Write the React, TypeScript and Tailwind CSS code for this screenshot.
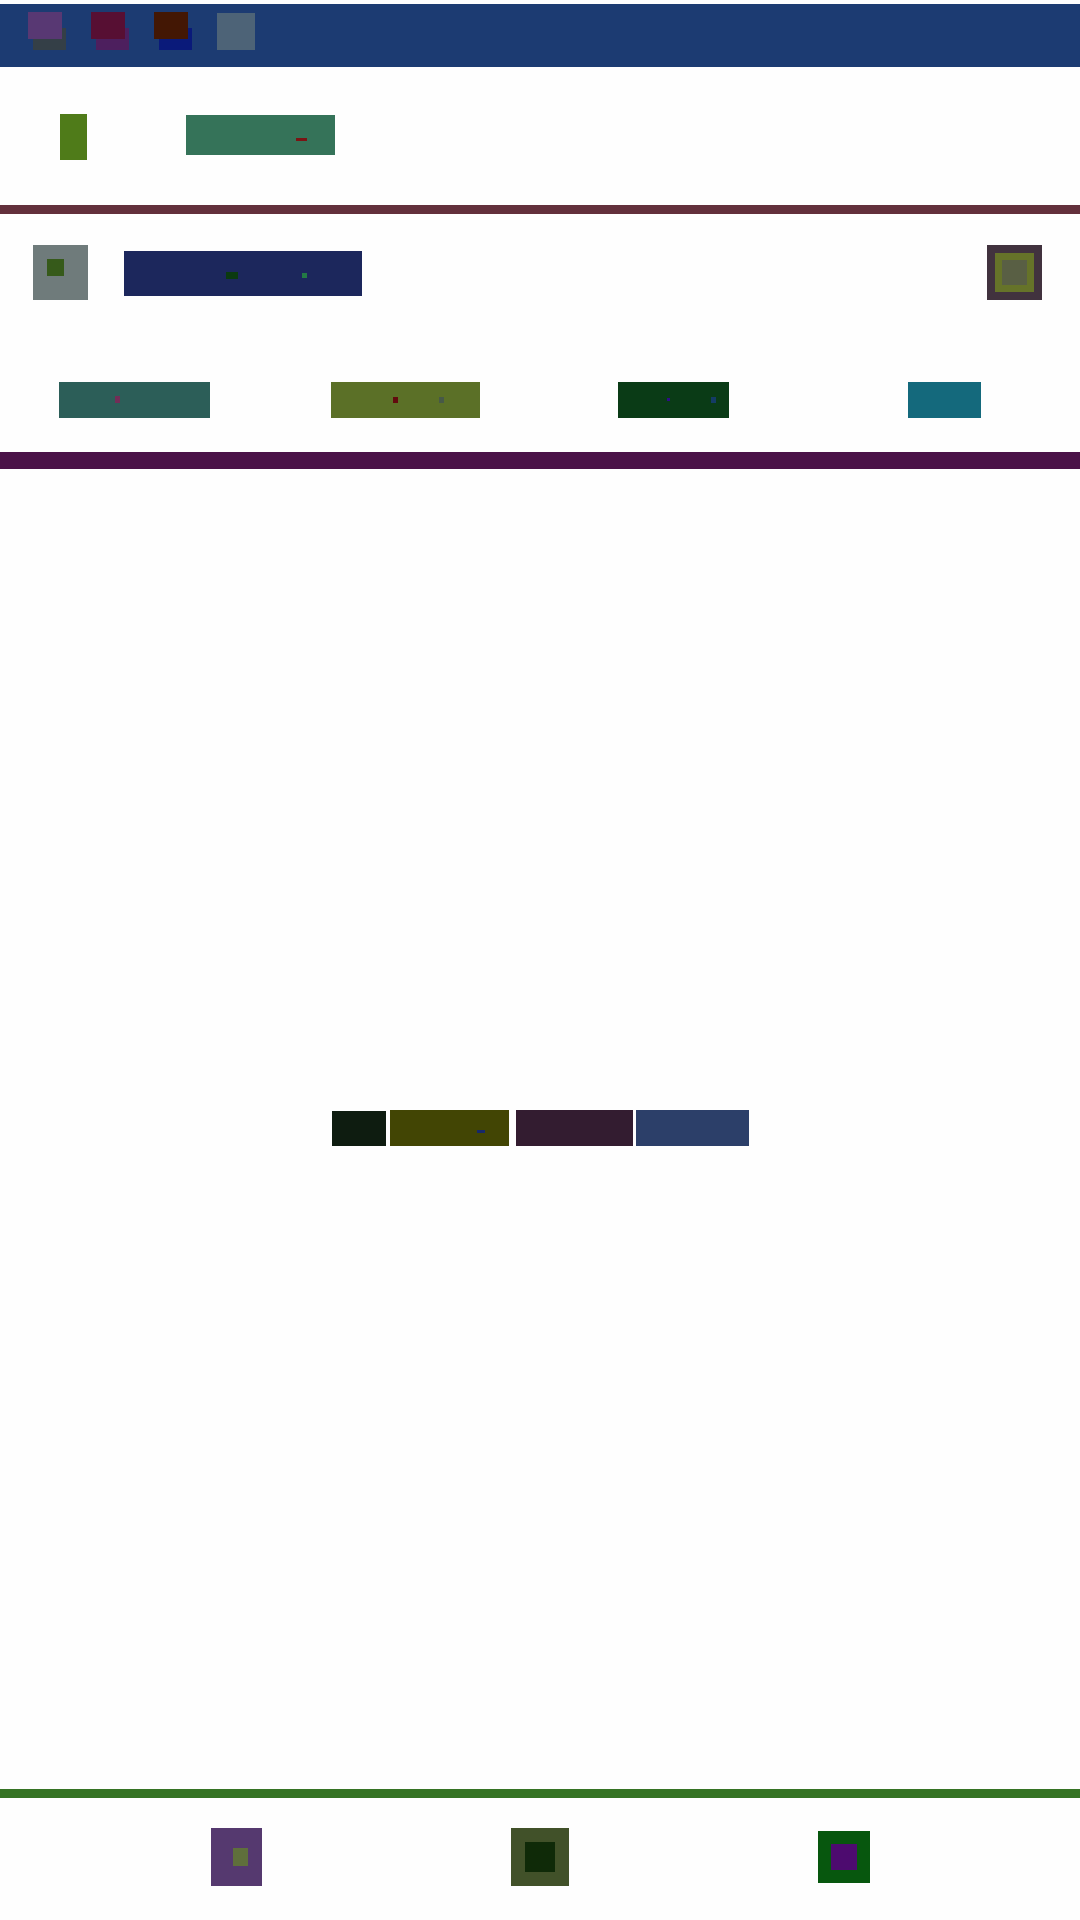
import React from 'react';

const HeaderIcon = ({ front, back }: { front: string; back: string }) => {
    return (
        <div className="relative w-[38px] h-[38px] flex justify-end items-end">
            <div className={`w-[33px] h-[22px] ${back}`} />
            <div className={`absolute left-0 top-0 w-[34px] h-[27px] ${front}`} />
        </div>
    );
};

const App = () => {
    return (
        <div className="w-[1080px] h-[1920px] pt-[4px] flex flex-col bg-[#fefefe] overflow-hidden">
            {/* header */}
            <div className="h-[63px] pl-[28px] pb-[17px] flex items-end gap-[25px] bg-[#1c3b72]">
                <HeaderIcon front="bg-[#583873]" back="bg-[#343f47]" />
                <HeaderIcon front="bg-[#570f33]" back="bg-[#4d1f5e]" />
                <HeaderIcon front="bg-[#431704]" back="bg-[#0a1a7a]" />
                <div className="w-[38px] h-[37px] bg-[#4d6377]" />
            </div>

            {/* brand row */}
            <div className="h-[138px] pl-[60px] pt-[47px] flex items-start gap-[99px]">
                <div className="w-[27px] h-[46px] bg-[#4f7b19]" />
                <div className="w-[149px] h-[40px] mt-px pl-[110px] pt-[23px] bg-[#357359]">
                    <div className="w-[11px] h-[3px] bg-[#7a1414]" />
                </div>
            </div>
            <div className="h-[9px] bg-[#63303c]" />

            {/* toolbar + tabs */}
            <div className="h-[238px] pt-[31px]">
                <div className="pl-[33px] pr-[38px] flex items-start">
                    <div className="w-[55px] h-[55px] pl-[14px] pt-[14px] bg-[#6f7b7b]">
                        <div className="w-[17px] h-[17px] bg-[#365a1a]" />
                    </div>
                    <div className="w-[238px] h-[45px] ml-[36px] mt-[6px] pl-[102px] pt-[21px] flex items-start gap-[64px] bg-[#1c275c]">
                        <div className="w-[12px] h-[7px] bg-[#0b3a10]" />
                        <div className="w-[5px] h-[5px] mt-px bg-[#237a45]" />
                    </div>
                    <div className="w-[55px] h-[55px] ml-auto flex items-center justify-center bg-[#41323e]">
                        <div className="w-[39px] h-[39px] flex items-center justify-center bg-[#667329]">
                            <div className="w-[25px] h-[25px] bg-[#595f44]" />
                        </div>
                    </div>
                </div>

                <div className="mt-[82px] pl-[59px] flex">
                    <div className="w-[151px] h-[36px] pl-[56px] pt-[14px] bg-[#2c5e58]">
                        <div className="w-[5px] h-[7px] bg-[#722e57]" />
                    </div>
                    <div className="w-[149px] h-[36px] ml-[121px] pl-[62px] pt-[15px] flex items-start gap-[41px] bg-[#5b7027]">
                        <div className="w-[5px] h-[6px] bg-[#620a0e]" />
                        <div className="w-[5px] h-[6px] bg-[#475947]" />
                    </div>
                    <div className="w-[111px] h-[36px] ml-[138px] pl-[49px] pt-[15px] flex items-start gap-[41px] bg-[#0a3b16]">
                        <div className="w-[3px] h-[3px] mt-px bg-[#2e0e86]" />
                        <div className="w-[5px] h-[6px] bg-[#143c66]" />
                    </div>
                    <div className="w-[73px] h-[36px] ml-[179px] bg-[#14697c]" />
                </div>
            </div>
            <div className="h-[17px] bg-[#4b1248]" />

            {/* empty state */}
            <div className="h-[1320px] pl-[332px] pt-[641px] flex items-start">
                <div className="w-[54px] h-[35px] mt-px bg-[#0e1c10]" />
                <div className="w-[119px] h-[36px] ml-[4px] pl-[87px] pt-[20px] bg-[#424504]">
                    <div className="w-[8px] h-[3px] bg-[#16286b]" />
                </div>
                <div className="w-[117px] h-[36px] ml-[7px] bg-[#331c30]" />
                <div className="w-[113px] h-[36px] ml-[3px] bg-[#2c3f69]" />
            </div>
            <div className="h-[9px] bg-[#357324]" />

            {/* bottom nav */}
            <div className="pl-[211px] pt-[30px] flex items-center gap-[249px]">
                <div className="w-[51px] h-[58px] pl-[22px] pt-[20px] bg-[#55396f]">
                    <div className="w-[15px] h-[18px] bg-[#5f6f3c]" />
                </div>
                <div className="w-[58px] h-[58px] flex items-center justify-center bg-[#415129]">
                    <div className="w-[30px] h-[30px] bg-[#0f2a08]" />
                </div>
                <div className="w-[52px] h-[52px] flex items-center justify-center bg-[#07570e]">
                    <div className="w-[26px] h-[26px] bg-[#4d0b6f]" />
                </div>
            </div>
        </div>
    );
};

export default App;
